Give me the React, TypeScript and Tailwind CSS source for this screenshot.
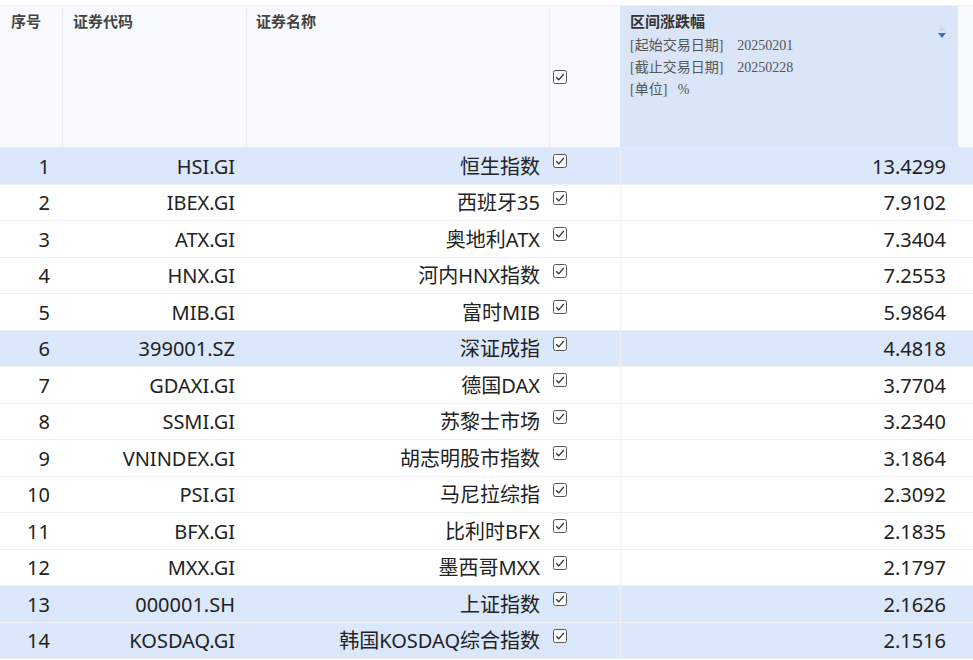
const rows: [string, string, string, string, boolean][] = [
  ['1', 'HSI.GI', '恒生指数', '13.4299', true],
  ['2', 'IBEX.GI', '西班牙35', '7.9102', false],
  ['3', 'ATX.GI', '奥地利ATX', '7.3404', false],
  ['4', 'HNX.GI', '河内HNX指数', '7.2553', false],
  ['5', 'MIB.GI', '富时MIB', '5.9864', false],
  ['6', '399001.SZ', '深证成指', '4.4818', true],
  ['7', 'GDAXI.GI', '德国DAX', '3.7704', false],
  ['8', 'SSMI.GI', '苏黎士市场', '3.2340', false],
  ['9', 'VNINDEX.GI', '胡志明股市指数', '3.1864', false],
  ['10', 'PSI.GI', '马尼拉综指', '2.3092', false],
  ['11', 'BFX.GI', '比利时BFX', '2.1835', false],
  ['12', 'MXX.GI', '墨西哥MXX', '2.1797', false],
  ['13', '000001.SH', '上证指数', '2.1626', true],
  ['14', 'KOSDAQ.GI', '韩国KOSDAQ综合指数', '2.1516', true],
];

function Check() {
  return (
    <svg width="14" height="14" viewBox="0 0 14 14" className="shrink-0">
      <rect x="0.5" y="0.5" width="13" height="13" rx="2" fill="#fff" stroke="#555" />
      <path d="M3.2 7.2 L5.8 9.8 L10.8 4" fill="none" stroke="#333" strokeWidth="1.3" />
    </svg>
  );
}

const serif = { fontFamily: '"Liberation Serif","Noto Sans CJK SC",serif' };

export default function App() {
  return (
    <div className="w-[973px] h-[660px] overflow-hidden bg-white text-[#222]" style={{ fontFamily: '"Noto Sans","Noto Sans CJK SC",sans-serif' }}>
      <div className="h-[6px] border-b border-[#eef0f3]" />
      <div className="flex h-[142px] bg-[#f8fafd] border-b border-[#e6e9ee]" style={serif}>
        <div className="w-[63px] border-r border-[#eceef2] pl-[11px] pt-[5px] text-[15px] font-bold text-[#444]">序号</div>
        <div className="w-[184px] border-r border-[#eceef2] pl-[10px] pt-[5px] text-[15px] font-bold text-[#444]">证券代码</div>
        <div className="w-[303px] border-r border-[#eceef2] pl-[9px] pt-[5px] text-[15px] font-bold text-[#444]">证券名称</div>
        <div className="w-[70px] flex items-center pl-[3px]"><Check /></div>
        <div className="w-[338px] bg-[#dae6f8] pl-[10px] pt-[5px] flex justify-between pr-[12px]">
          <div className="text-[#555] text-[14px] leading-[22px]">
            <div className="font-bold text-[15px] text-[#333] mb-[2px]">区间涨跌幅</div>
            <div>[起始交易日期]&nbsp;&nbsp;&nbsp;&nbsp;20250201</div>
            <div>[截止交易日期]&nbsp;&nbsp;&nbsp;&nbsp;20250228</div>
            <div>[单位]&nbsp;&nbsp;&nbsp;%</div>
          </div>
          <div className="flex flex-col items-center pt-[16px] gap-[2px]">
            <div className="w-0 h-0 border-x-[4px] border-x-transparent border-b-[4px] border-b-[#cfd6e0]" />
            <div className="w-0 h-0 border-x-[4px] border-x-transparent border-t-[5px] border-t-[#2f6fd8]" />
          </div>
        </div>
      </div>
      {rows.map(([n, code, name, val, hl]) => (
        <div key={n} className={`flex h-[36.5px] border-b border-[#eef0f3] text-[20px] ${hl ? 'bg-[#dbe7fa]' : 'bg-white'}`}>
          <div className="w-[63px] pr-[13px] pt-[2px] flex items-center justify-end">{n}</div>
          <div className="w-[184px] pr-[12px] pt-[2px] flex items-center justify-end">{code}</div>
          <div className="w-[303px] pr-[10px] pt-[2px] flex items-center justify-end">{name}</div>
          <div className="w-[70px] pl-[3px] pt-[6px]"><Check /></div>
          <div className={`w-[338px] pr-[12px] pt-[2px] flex items-center justify-end border-l border-[#eef0f3] ${hl ? 'bg-[#dbe7fa]' : ''}`}>{val}</div>
        </div>
      ))}
    </div>
  );
}
